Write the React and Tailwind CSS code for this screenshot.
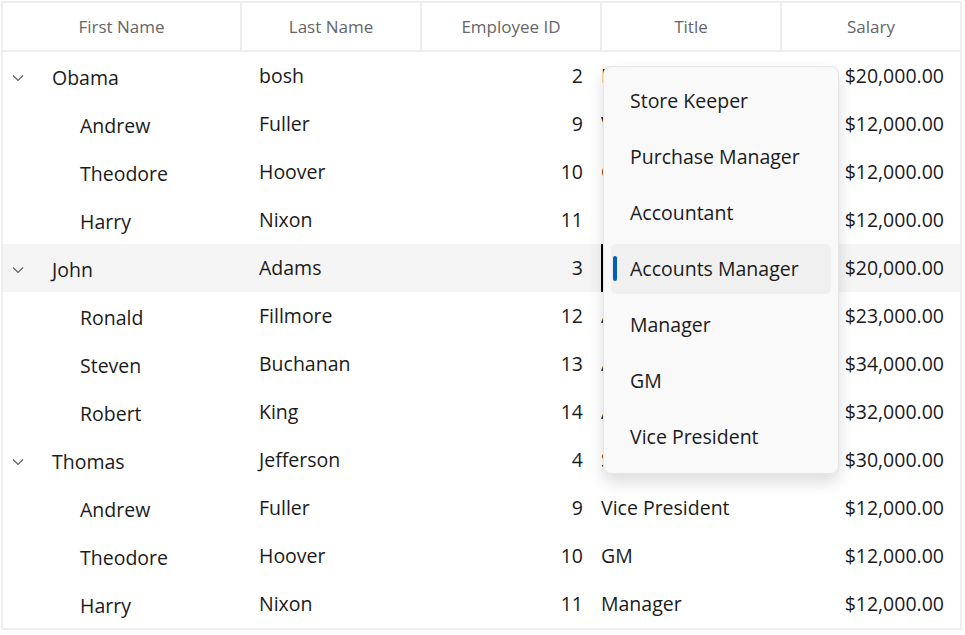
import React from "react";

const rows = [
  { first: "Obama", last: "bosh", id: 2, title: "Manager", salary: "$20,000.00", group: true },
  { first: "Andrew", last: "Fuller", id: 9, title: "Vice President", salary: "$12,000.00" },
  { first: "Theodore", last: "Hoover", id: 10, title: "GM", salary: "$12,000.00" },
  { first: "Harry", last: "Nixon", id: 11, title: "", salary: "$12,000.00" },
  { first: "John", last: "Adams", id: 3, title: "", salary: "$20,000.00", group: true, active: true },
  { first: "Ronald", last: "Fillmore", id: 12, title: "Accountant", salary: "$23,000.00" },
  { first: "Steven", last: "Buchanan", id: 13, title: "Accountant", salary: "$34,000.00" },
  { first: "Robert", last: "King", id: 14, title: "Accounts Manager", salary: "$32,000.00" },
  { first: "Thomas", last: "Jefferson", id: 4, title: "Store Keeper", salary: "$30,000.00", group: true },
  { first: "Andrew", last: "Fuller", id: 9, title: "Vice President", salary: "$12,000.00" },
  { first: "Theodore", last: "Hoover", id: 10, title: "GM", salary: "$12,000.00" },
  { first: "Harry", last: "Nixon", id: 11, title: "Manager", salary: "$12,000.00" },
];

const options = [
  "Store Keeper",
  "Purchase Manager",
  "Accountant",
  "Accounts Manager",
  "Manager",
  "GM",
  "Vice President",
];

const Chevron = () => (
  <svg width="12" height="8" viewBox="0 0 12 8" className="text-[#5c5c5c]">
    <path d="M1 1.5 L6 6.5 L11 1.5" fill="none" stroke="currentColor" strokeWidth="1.1" />
  </svg>
);

export default function App() {
  return (
    <div className="w-[965px] h-[635px] bg-white p-px font-['Segoe_UI','Open_Sans',sans-serif] text-[#1b1b1b]">
      <div className="relative w-[961px] border-2 border-[#eeeeee]">
        {/* Header */}
        <div className="flex h-[49px] border-b-2 border-[#eeeeee] text-[17px] text-[#666666]">
          <div className="w-[239px] border-r-2 border-[#eeeeee] flex items-center justify-center">First Name</div>
          <div className="w-[180px] border-r-2 border-[#eeeeee] flex items-center justify-center">Last Name</div>
          <div className="w-[180px] border-r-2 border-[#eeeeee] flex items-center justify-center">Employee ID</div>
          <div className="w-[180px] border-r-2 border-[#eeeeee] flex items-center justify-center">Title</div>
          <div className="w-[178px] flex items-center justify-center">Salary</div>
        </div>

        {/* Rows */}
        {rows.map((r, i) => (
          <div key={i} className={"flex h-[48px] items-center text-[19.5px] " + (r.active ? "bg-[#f5f5f5]" : "")}>
            <div className="w-[239px] flex items-center pt-[3px]">
              {r.group ? (
                <>
                  <span className="w-[9px]"></span>
                  <Chevron />
                  <span className="ml-[28px]">{r.first}</span>
                </>
              ) : (
                <span className="ml-[77px]">{r.first}</span>
              )}
            </div>
            <div className="w-[180px] pl-[17px]">{r.last}</div>
            <div className="w-[180px] pr-[19px] text-right">{r.id}</div>
            <div className={"w-[180px] h-full flex items-center -ml-px " + (r.active ? "border-l-2 border-black" : "")}>
              {r.title}
            </div>
            <div className="w-[178px] pr-[15px] text-right">{r.salary}</div>
          </div>
        ))}

        {/* Dropdown popup */}
        <div className="absolute left-[600px] top-[63px] w-[236px] h-[408px] rounded-lg bg-[#f9f9f9] border border-[#e5e5e5] shadow-[0_8px_16px_rgba(0,0,0,0.14)] pt-[6px] text-[19.5px]">
          {options.map((o) => (
            <div key={o} className="h-[56px] px-[7px] py-[3px]">
              <div
                className={
                  "relative h-full rounded-[5px] flex items-center pl-[19px] " +
                  (o === "Accounts Manager" ? "bg-[#f0f0f0]" : "")
                }
              >
                {o === "Accounts Manager" && (
                  <span className="absolute left-[2px] top-[12px] w-[4px] h-[25px] rounded-full bg-[#005fb8]"></span>
                )}
                {o}
              </div>
            </div>
          ))}
        </div>
      </div>
    </div>
  );
}
